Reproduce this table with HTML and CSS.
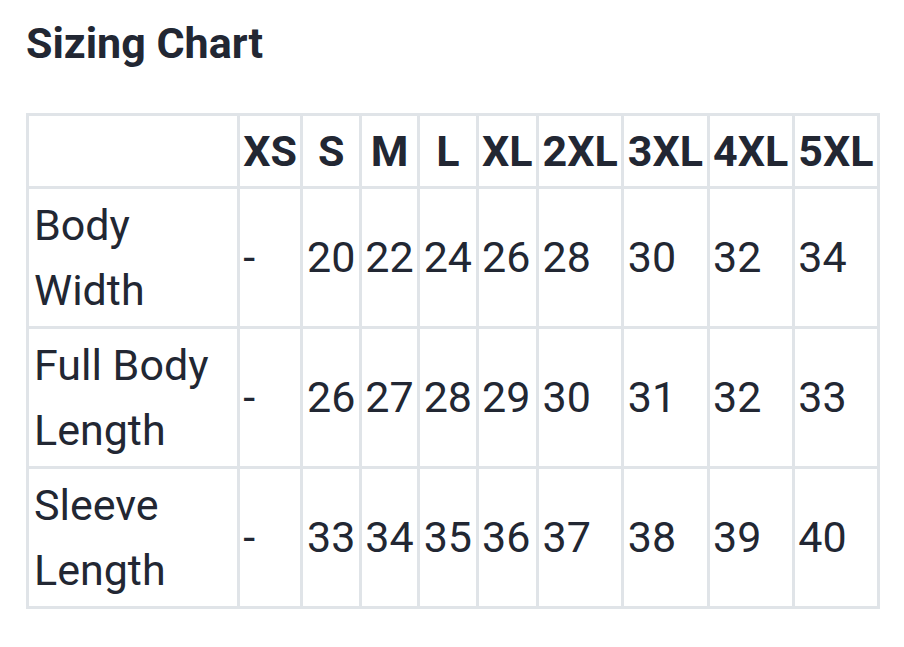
FILE: index.html
```html
<!DOCTYPE html>
<html lang="en">
<head>
<meta charset="utf-8">
<title>Sizing Chart</title>
<link rel="stylesheet" href="styles.css">
</head>
<body>
<div class="page">
  <h2 class="title">Sizing Chart</h2>
  <table class="chart">
    <thead>
      <tr>
        <th></th>
        <th>XS</th><th>S</th><th>M</th><th>L</th><th>XL</th><th>2XL</th><th>3XL</th><th>4XL</th><th>5XL</th>
      </tr>
    </thead>
    <tbody>
      <tr>
        <td>Body Width</td>
        <td>-</td><td>20</td><td>22</td><td>24</td><td>26</td><td>28</td><td>30</td><td>32</td><td>34</td>
      </tr>
      <tr>
        <td>Full Body Length</td>
        <td>-</td><td>26</td><td>27</td><td>28</td><td>29</td><td>30</td><td>31</td><td>32</td><td>33</td>
      </tr>
      <tr>
        <td>Sleeve Length</td>
        <td>-</td><td>33</td><td>34</td><td>35</td><td>36</td><td>37</td><td>38</td><td>39</td><td>40</td>
      </tr>
    </tbody>
  </table>
</div>
</body>
</html>
```
FILE: styles.css
```css
html, body {
  margin: 0;
  padding: 0;
  background: #ffffff;
}
.page {
  padding: 16px 24px 0 26px;
  font-family: Roboto, "Liberation Sans", sans-serif;
  color: #222733;
}
.title {
  margin: 0 0 43px 0;
  font-size: 43px;
  font-weight: 700;
  line-height: 54px;
}
.chart {
  width: 100%;
  border-collapse: collapse;
  border: 3px solid #e0e4e8;
  font-size: 43px;
  line-height: 64.5px;
}
.chart th,
.chart td {
  border: 3px solid #e0e4e8;
  padding: 4px 3.5px;
  text-align: left;
  vertical-align: middle;
}
.chart td:first-child {
  padding-left: 5px;
}
.chart th {
  font-weight: 700;
  text-align: center;
  line-height: 62px;
}
```
